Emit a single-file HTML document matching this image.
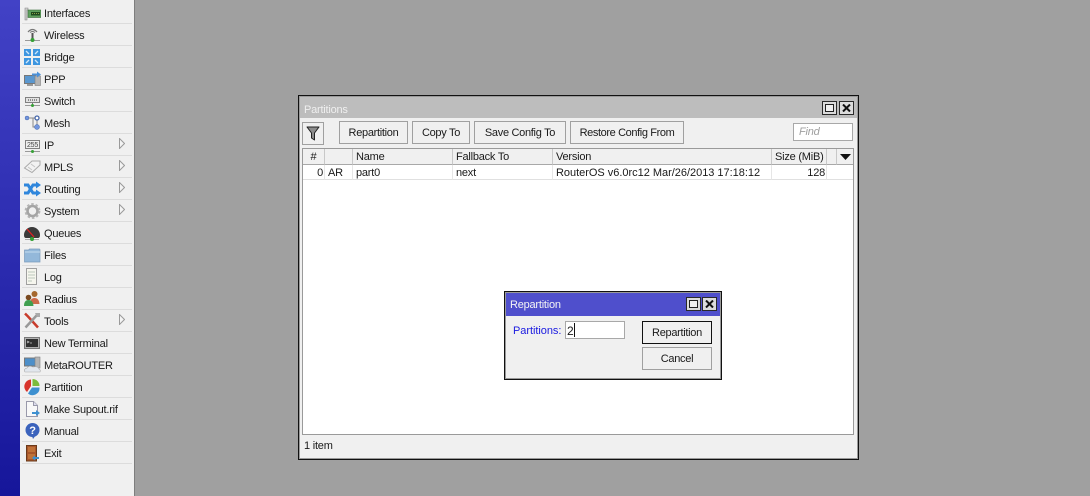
<!DOCTYPE html>
<html><head><meta charset="utf-8"><style>
html,body{margin:0;padding:0}
body{width:1090px;height:496px;position:relative;overflow:hidden;background:#a0a0a0;font:11px/14px "Liberation Sans",sans-serif;color:#1a1a1a;letter-spacing:-.22px}
div,svg{position:absolute}
.t{white-space:nowrap}
.sep{left:22px;width:110px;height:1px;background:#dcdcdc}
.m{left:44px;white-space:nowrap;height:14px;margin-top:1px}
.ic{left:23px;width:18px;height:18px}
.ar{left:119px;width:6px;height:11px}
.b{background:#f0f0f0;border:1px solid #a0a0a0;box-sizing:border-box;text-align:center;height:23px;line-height:23px;white-space:nowrap;letter-spacing:-.3px}
.h{top:149px;height:16px;background:#f0f0f0;border-right:1px solid #c8c8c8;border-bottom:1px solid #a8a8a8;box-sizing:border-box;line-height:17px;padding-left:3px;white-space:nowrap}
.c{top:165px;height:15px;line-height:16px;border-right:1px solid #e6e6e6;border-bottom:1px solid #e0e0e0;box-sizing:border-box;padding-left:3px;background:#fff;white-space:nowrap}
.wb{width:15px;height:14px;background:#dcdcdc;border:1px solid #2a2a2a;box-sizing:border-box}
.ws{width:9px;height:8px;background:#f0f0f0;border:1px solid #222;box-sizing:border-box}
.w{background:#999;border:1px solid #111;box-sizing:border-box}
</style></head><body>
<div style="left:0;top:0;width:20px;height:496px;background:linear-gradient(#4242c6,#16169a)"></div>
<div style="left:20px;top:0;width:114px;height:496px;background:#f0f0f0;border-right:1px solid #7e7e7e"></div>

<div class="sep" style="top:23px"></div><div class="sep" style="top:45px"></div><div class="sep" style="top:67px"></div><div class="sep" style="top:89px"></div><div class="sep" style="top:111px"></div><div class="sep" style="top:133px"></div><div class="sep" style="top:155px"></div><div class="sep" style="top:177px"></div><div class="sep" style="top:199px"></div><div class="sep" style="top:221px"></div><div class="sep" style="top:243px"></div><div class="sep" style="top:265px"></div><div class="sep" style="top:287px"></div><div class="sep" style="top:309px"></div><div class="sep" style="top:331px"></div><div class="sep" style="top:353px"></div><div class="sep" style="top:375px"></div><div class="sep" style="top:397px"></div><div class="sep" style="top:419px"></div><div class="sep" style="top:441px"></div><div class="sep" style="top:463px"></div>

<div class="m" style="top:6px">Interfaces</div>
<div class="m" style="top:28px">Wireless</div>
<div class="m" style="top:50px">Bridge</div>
<div class="m" style="top:72px">PPP</div>
<div class="m" style="top:94px">Switch</div>
<div class="m" style="top:116px">Mesh</div>
<div class="m" style="top:138px">IP</div>
<div class="m" style="top:160px">MPLS</div>
<div class="m" style="top:182px">Routing</div>
<div class="m" style="top:204px">System</div>
<div class="m" style="top:226px">Queues</div>
<div class="m" style="top:248px">Files</div>
<div class="m" style="top:270px">Log</div>
<div class="m" style="top:292px">Radius</div>
<div class="m" style="top:314px">Tools</div>
<div class="m" style="top:336px">New Terminal</div>
<div class="m" style="top:358px">MetaROUTER</div>
<div class="m" style="top:380px">Partition</div>
<div class="m" style="top:402px">Make Supout.rif</div>
<div class="m" style="top:424px">Manual</div>
<div class="m" style="top:446px">Exit</div>

<svg class="ar" style="top:138px" viewBox="0 0 6 11"><path d="M.5.500 5.500 5.500.5 10.500Z" fill="#f4f4f4" stroke="#9a9a9a"/></svg>
<svg class="ar" style="top:160px" viewBox="0 0 6 11"><path d="M.5.500 5.500 5.500.5 10.500Z" fill="#f4f4f4" stroke="#9a9a9a"/></svg>
<svg class="ar" style="top:182px" viewBox="0 0 6 11"><path d="M.5.500 5.500 5.500.5 10.500Z" fill="#f4f4f4" stroke="#9a9a9a"/></svg>
<svg class="ar" style="top:204px" viewBox="0 0 6 11"><path d="M.5.500 5.500 5.500.5 10.500Z" fill="#f4f4f4" stroke="#9a9a9a"/></svg>
<svg class="ar" style="top:314px" viewBox="0 0 6 11"><path d="M.5.500 5.500 5.500.5 10.500Z" fill="#f4f4f4" stroke="#9a9a9a"/></svg>

<!-- Interfaces -->
<svg class="ic" style="top:4px" viewBox="0 0 18 18"><path d="M2 4h3v2H4v10H2z" fill="#d0d0d0" stroke="#888" stroke-width=".6"/><rect x="5" y="6" width="13" height="7.500" fill="#5da05d" stroke="#3a6a3a" stroke-width=".6"/><path d="M8 8h9v3.500H8z" fill="#1e4a1e"/><path d="M9 9.500h7" stroke="#88a048" stroke-dasharray="1 1"/></svg>
<!-- Wireless -->
<svg class="ic" style="top:26px" viewBox="0 0 18 18"><path d="M5 6Q9.500 1 14 6" fill="none" stroke="#777" stroke-width="1.300"/><path d="M7 6.500Q9.500 4.500 12 6.500" fill="none" stroke="#777"/><path d="M9.500 7v6" stroke="#555" stroke-width="2"/><path d="M2 14.500h15" stroke="#999"/><circle cx="9.500" cy="14" r="2" fill="#35a035"/></svg>
<!-- Bridge -->
<svg class="ic" style="top:48px" viewBox="0 0 18 18"><g fill="#3e96e0"><rect x="1" y="1" width="7" height="7"/><rect x="10" y="1" width="7" height="7"/><rect x="1" y="10" width="7" height="7"/><rect x="10" y="10" width="7" height="7"/></g><path d="M3 3l3 3M15 3l-3 3M3 15l3-3M15 15l-3-3" stroke="#cfe8fa" stroke-width="1.300"/></svg>
<!-- PPP -->
<svg class="ic" style="top:70px" viewBox="0 0 18 18"><rect x="1.500" y="5.500" width="11" height="8" fill="#5a97cf" stroke="#777"/><path d="M4 14h6v2H4z" fill="#999"/><rect x="12" y="6" width="5.500" height="9.500" fill="#b4b4b4" stroke="#808080" stroke-width=".6"/><path d="M9 3.500h5V1.500l4 3-4 3V5.500H9z" fill="#4a90d9"/></svg>
<!-- Switch -->
<svg class="ic" style="top:92px" viewBox="0 0 18 18"><rect x="2.500" y="5.500" width="14" height="5" fill="#e2e2e2" stroke="#808080"/><path d="M5 8h10" stroke="#333" stroke-dasharray="1 1"/><path d="M2 13.500h15" stroke="#999"/><path d="M9.500 11v2" stroke="#777"/><circle cx="9.500" cy="13.500" r="1.500" fill="#35a035"/></svg>
<!-- Mesh -->
<svg class="ic" style="top:114px" viewBox="0 0 18 18"><path d="M4 4h10M10 4v9h4M14 4v7" stroke="#888" fill="none"/><circle cx="4" cy="4" r="2" fill="#7396de" stroke="#4466aa" stroke-width=".5"/><circle cx="14" cy="4" r="2" fill="#fff" stroke="#4466aa" stroke-width="1.300"/><circle cx="14" cy="13" r="2.500" fill="#7396de" stroke="#4466aa" stroke-width=".5"/></svg>
<!-- IP -->
<svg class="ic" style="top:136px" viewBox="0 0 18 18"><rect x="2.500" y="4.500" width="14" height="8" fill="#efefef" stroke="#808080"/><text x="9.500" y="11" font-size="7" text-anchor="middle" fill="#444" font-family="Liberation Sans">255</text><path d="M2 15.500h15" stroke="#999"/><circle cx="9.500" cy="15.500" r="1.500" fill="#35a035"/></svg>
<!-- MPLS -->
<svg class="ic" style="top:158px" viewBox="0 0 18 18"><path d="M1.500 10 9 3h8v4l-8 7.500z" fill="#f2f2f2" stroke="#aaa"/><path d="M5 9l4 3M8 6l4 3" stroke="#c4c4c4"/></svg>
<!-- Routing -->
<svg class="ic" style="top:180px" viewBox="0 0 18 18"><path d="M1 5h4l5 8h4M1 13h4l5-8h4" fill="none" stroke="#2f86dc" stroke-width="3"/><path d="M13 1.500l5 3.500-5 3.500zM13 9.500l5 3.500-5 3.500z" fill="#2f86dc"/></svg>
<!-- System -->
<svg class="ic" style="top:202px" viewBox="0 0 18 18"><circle cx="9.500" cy="9" r="5" fill="none" stroke="#a4a4a4" stroke-width="2.600"/><circle cx="9.500" cy="9" r="7" fill="none" stroke="#b4b4b4" stroke-width="1.800" stroke-dasharray="2.500 2"/></svg>
<!-- Queues -->
<svg class="ic" style="top:224px" viewBox="0 0 18 18"><path d="M1 11a8 8 0 0 1 16 0q0 3-2 3H3q-2 0-2-3z" fill="#3a3a3a"/><path d="M4 5l7 8" stroke="#e02020" stroke-width="1.300"/><path d="M2 15.500h14" stroke="#aaa"/><circle cx="9" cy="15" r="2" fill="#35a035"/></svg>
<!-- Files -->
<svg class="ic" style="top:246px" viewBox="0 0 18 18"><path d="M1.500 4h4l1-1h10q.5 0 .5 1v12H1.500z" fill="#93b8da" stroke="#7a9aba" stroke-width=".7"/><path d="M2 6h15" stroke="#c6dbee"/></svg>
<!-- Log -->
<svg class="ic" style="top:268px" viewBox="0 0 18 18"><rect x="3.500" y="0.500" width="10" height="16" fill="#f6f6ee" stroke="#a0a0a0"/><path d="M5 4h7M5 7h7M5 10h7M5 13h4" stroke="#bcc8bc"/></svg>
<!-- Radius -->
<svg class="ic" style="top:290px" viewBox="0 0 18 18"><circle cx="11.500" cy="4" r="3" fill="#a5682e"/><path d="M7 14q0-6 4.500-6t5 6z" fill="#cc6a4a"/><circle cx="5.500" cy="7.500" r="2.800" fill="#7a4a20"/><path d="M1 16q0-6 4.500-6t5 6z" fill="#3f9f4f"/></svg>
<!-- Tools -->
<svg class="ic" style="top:312px" viewBox="0 0 18 18"><path d="M2 1.500l3 3 10 11" fill="none" stroke="#c83c2c" stroke-width="2.500"/><path d="M14 3L2.500 15.500" fill="none" stroke="#999" stroke-width="2.500"/><path d="M12 1l5 0v4l-3 0z" fill="#aaa"/></svg>
<!-- New Terminal -->
<svg class="ic" style="top:334px" viewBox="0 0 18 18"><rect x="1.500" y="3.500" width="15" height="11" fill="#b0b0b0" stroke="#777"/><rect x="3" y="5" width="12" height="8" fill="#303030"/><path d="M4 7l2 1-2 1M7 9h2" stroke="#ccc" fill="none" stroke-width=".7"/></svg>
<!-- MetaROUTER -->
<svg class="ic" style="top:356px" viewBox="0 0 18 18"><rect x="1.500" y="2" width="11" height="8" fill="#4d8fc9" stroke="#777"/><rect x="12" y="1" width="5" height="11" fill="#b4b4b4" stroke="#808080" stroke-width=".6"/><path d="M2 16q-2-3 2-4 2-3 6-1 5-1 6 2 2 1 1 3z" fill="#e2e7ee" stroke="#aaa" stroke-width=".6"/></svg>
<!-- Partition -->
<svg class="ic" style="top:378px" viewBox="0 0 18 18"><path d="M8 1.500a7 7 0 0 0-4 12.500L8 8z" fill="#d8342c"/><path d="M9.500 1a7 7 0 0 1 7 7h-7z" fill="#7cbb3c"/><path d="M9 9.500H16.500a7 7 0 0 1-11.500 6z" fill="#3d90d0"/></svg>
<!-- Supout -->
<svg class="ic" style="top:400px" viewBox="0 0 18 18"><path d="M3.500 1.500h7l4 4v11h-11z" fill="#f8f8f8" stroke="#99a"/><path d="M10.500 1.500v4h4" fill="#dde" stroke="#99a"/><path d="M9 12h4v-2l4 3-4 3v-2H9z" fill="#3d90d0"/></svg>
<!-- Manual -->
<svg class="ic" style="top:422px" viewBox="0 0 18 18"><circle cx="9.500" cy="8" r="7" fill="#3a62bc"/><path d="M9 14l1 3 3-4z" fill="#3a62bc"/><text x="9.500" y="12" font-size="11" font-weight="bold" text-anchor="middle" fill="#fff" font-family="Liberation Sans">?</text></svg>
<!-- Exit -->
<svg class="ic" style="top:444px" viewBox="0 0 18 18"><rect x="3.500" y="1.500" width="10" height="15.500" fill="#a8562a" stroke="#6a3a1a"/><rect x="5" y="3" width="7" height="5" fill="#c07238"/><rect x="5" y="10" width="7" height="5" fill="#c07238"/><path d="M9 14l3-2.500v1.500h4v2h-4v1.500z" fill="#3d90d0"/></svg>

<!-- Partitions window -->
<div class="w" style="left:298px;top:95px;width:561px;height:365px"></div>
<div style="left:300px;top:97px;width:557px;height:361px;background:#f0f0f0"></div>
<div style="left:300px;top:97px;width:557px;height:21px;background:#bdbdbd"></div>
<div class="t" style="left:304px;top:103px;color:#efefef;line-height:15px">Partitions</div>
<div class="wb" style="left:822px;top:101px"></div><div class="ws" style="left:825px;top:104px"></div>
<div class="wb" style="left:839px;top:101px"></div>
<svg style="left:842px;top:104px;width:9px;height:8px" viewBox="0 0 9 8"><path d="M1 .5l7 7M8 .5l-7 7" stroke="#111" stroke-width="2"/></svg>

<div class="b" style="left:302px;top:122px;width:22px;height:23px"></div>
<svg style="left:306px;top:126px;width:14px;height:15px" viewBox="0 0 14 15"><path d="M1 1h12L8.500 7v7l-3-2V7z" fill="#8c8c8c" stroke="#222" stroke-linejoin="round"/></svg>
<div class="b" style="left:339px;top:121px;width:69px">Repartition</div>
<div class="b" style="left:412px;top:121px;width:58px">Copy To</div>
<div class="b" style="left:474px;top:121px;width:92px">Save Config To</div>
<div class="b" style="left:570px;top:121px;width:114px;letter-spacing:-.38px">Restore Config From</div>
<div style="left:793px;top:123px;width:60px;height:18px;background:#fff;border:1px solid #a8a8a8;box-sizing:border-box;font-style:italic;color:#a0a0a0;line-height:17px;padding-left:5px">Find</div>

<div style="left:302px;top:148px;width:552px;height:287px;background:#fff;border:1px solid #9a9a9a;box-sizing:border-box"></div>
<div class="h" style="left:303px;width:22px;text-align:center;padding:0">#</div>
<div class="h" style="left:325px;width:28px"></div>
<div class="h" style="left:353px;width:100px">Name</div>
<div class="h" style="left:453px;width:100px">Fallback To</div>
<div class="h" style="left:553px;width:219px">Version</div>
<div class="h" style="left:772px;width:55px">Size (MiB)</div>
<div class="h" style="left:827px;width:10px"></div>
<div class="h" style="left:837px;width:16px;border-right:0"></div>
<svg style="left:840px;top:154px;width:11px;height:6px" viewBox="0 0 11 6"><path d="M0 0h11L5.500 6z" fill="#111"/></svg>

<div class="c" style="left:303px;width:22px;text-align:right;padding:0 1px 0 0">0</div>
<div class="c" style="left:325px;width:28px">AR</div>
<div class="c" style="left:353px;width:100px">part0</div>
<div class="c" style="left:453px;width:100px">next</div>
<div class="c" style="left:553px;width:219px;letter-spacing:-.02px">RouterOS v6.0rc12 Mar/26/2013 17:18:12</div>
<div class="c" style="left:772px;width:55px;text-align:right;padding:0 1px 0 0">128</div>
<div class="c" style="left:827px;width:26px;border-right:0"></div>

<div class="t" style="left:304px;top:439px;line-height:15px">1 item</div>

<!-- Repartition dialog -->
<div class="w" style="left:504px;top:291px;width:218px;height:89px"></div>
<div style="left:506px;top:293px;width:214px;height:85px;background:#f0f0f0"></div>
<div style="left:506px;top:293px;width:214px;height:23px;background:#4f4fcc"></div>
<div class="t" style="left:510px;top:298px;color:#f4f4f4;line-height:15px">Repartition</div>
<div class="wb" style="left:686px;top:297px"></div><div class="ws" style="left:689px;top:300px"></div>
<div class="wb" style="left:702px;top:297px"></div>
<svg style="left:705px;top:300px;width:9px;height:8px" viewBox="0 0 9 8"><path d="M1 .5l7 7M8 .5l-7 7" stroke="#111" stroke-width="2"/></svg>
<div class="t" style="left:513px;top:324px;color:#1a1ae0;letter-spacing:-.05px">Partitions:</div>
<div style="left:565px;top:321px;width:60px;height:18px;background:#fff;border:1px solid #a8a8a8;box-sizing:border-box;line-height:18px;padding-left:1px;font-size:12px">2</div>
<div style="left:574px;top:323px;width:1px;height:14px;background:#111"></div>
<div class="b" style="left:642px;top:321px;width:70px;border-color:#111">Repartition</div>
<div class="b" style="left:642px;top:347px;width:70px">Cancel</div>
</body></html>
